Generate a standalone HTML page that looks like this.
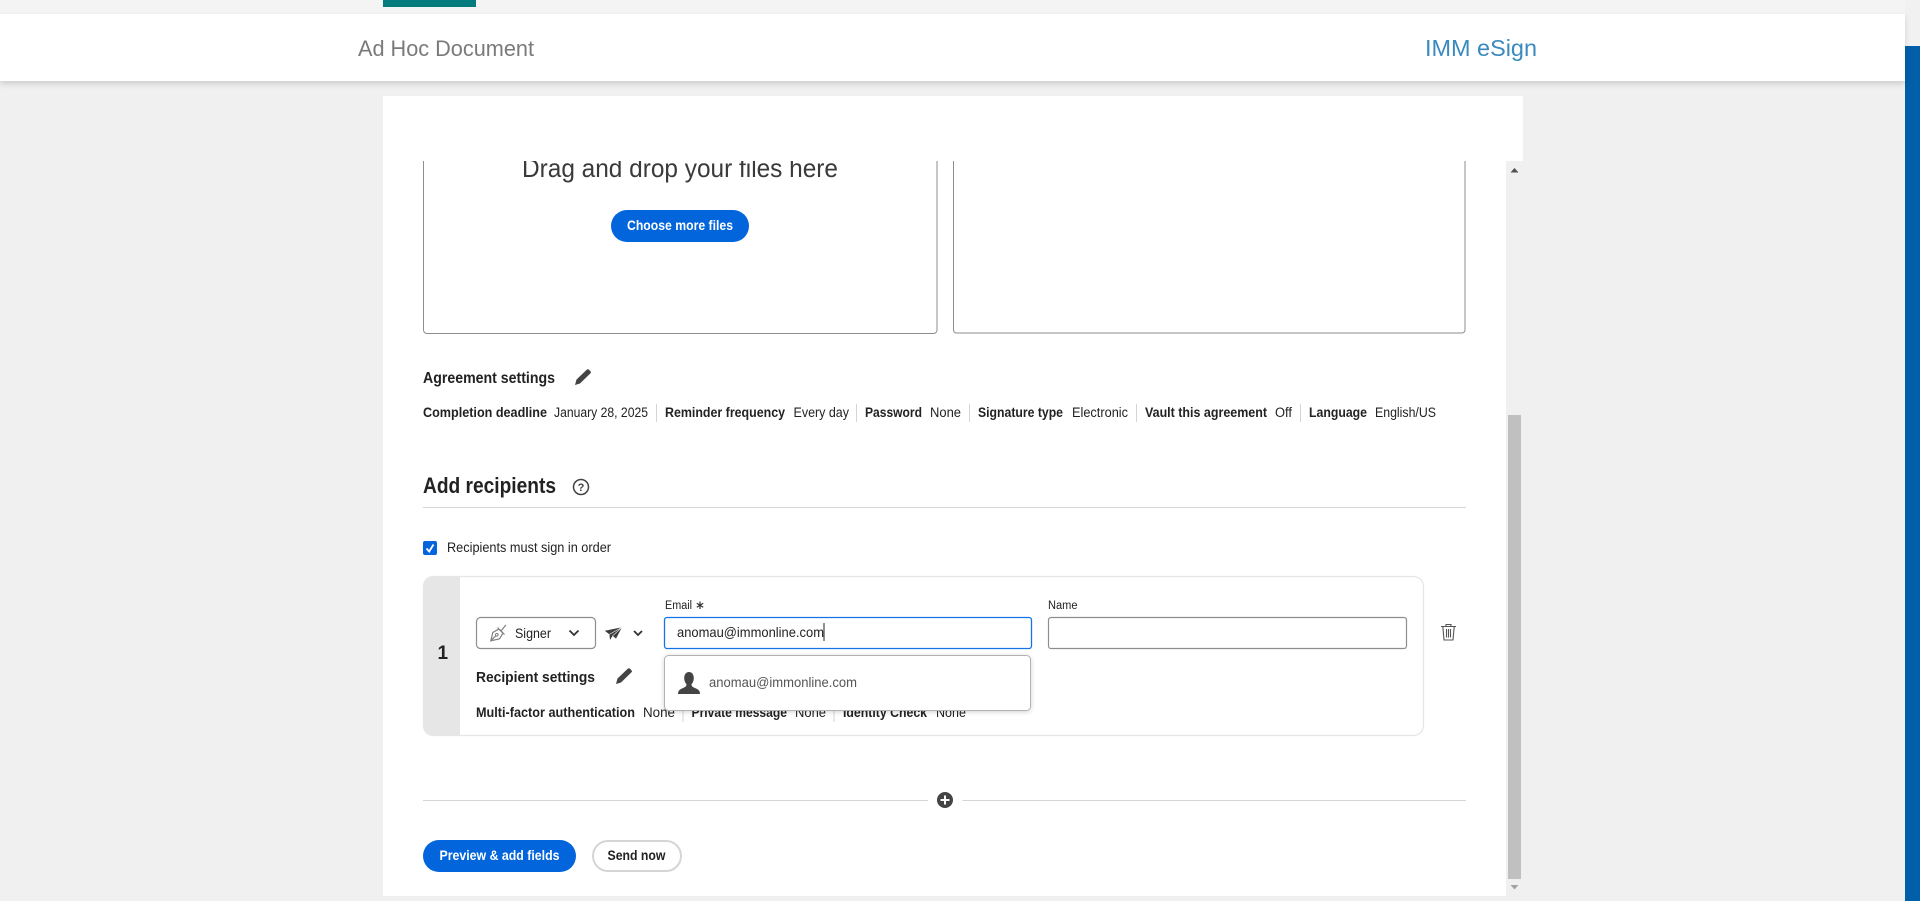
<!DOCTYPE html>
<html lang="en">
<head>
<meta charset="utf-8">
<title>Ad Hoc Document</title>
<style>
html,body{margin:0;padding:0;width:1920px;height:901px;overflow:hidden;background:#f0f0f0}
svg{display:block;position:absolute;left:0;top:0}
text{font-family:"Liberation Sans",sans-serif;fill:#222;font-size:13.5px}
.b{font-weight:700}
.sep{stroke:#d5d5d5;stroke-width:1}
</style>
</head>
<body>
<svg width="1920" height="901" viewBox="0 0 1920 901" xmlns="http://www.w3.org/2000/svg">
<defs>
<filter id="hs" x="-2%" y="-10%" width="104%" height="150%"><feDropShadow dx="0" dy="3" stdDeviation="3" flood-color="#000" flood-opacity=".14"/></filter>
<filter id="ds" x="-5%" y="-20%" width="110%" height="150%"><feDropShadow dx="0" dy="1" stdDeviation="2.5" flood-color="#000" flood-opacity=".18"/></filter>
<clipPath id="scrollclip"><rect x="383" y="161" width="1123" height="735"/></clipPath>
</defs>

<rect width="1920" height="901" fill="#f0f0f0"/>
<!-- top strip -->
<rect width="1905" height="14" fill="#f4f4f4"/>
<rect x="1905" y="0" width="15" height="46" fill="#f1f1f1"/>
<rect x="383" y="0" width="93" height="7" fill="#047c7e"/>
<rect x="1905" y="46" width="15" height="855" fill="#005fa8"/>

<!-- panel -->
<rect x="383" y="96" width="1140" height="800" fill="#fff"/>
<rect x="1506" y="161" width="17" height="735" fill="#f0f0f0"/>
<rect x="1508" y="415" width="13" height="464" fill="#c0c0c0"/>
<path d="M1510.5 172.5L1514.5 168L1518.5 172.5Z" fill="#505050"/>
<path d="M1510.5 885L1514.5 889.5L1518.5 885Z" fill="#a3a3a3"/>

<!-- header -->
<rect x="0" y="14" width="1905" height="67" fill="#fff" filter="url(#hs)"/>
<text x="358" y="56" textLength="176" lengthAdjust="spacingAndGlyphs" style="font-size:22px;fill:#7a7a7a">Ad Hoc Document</text>
<text x="1425" y="56" textLength="112" lengthAdjust="spacingAndGlyphs" style="font-size:23px;fill:#3a8abf">IMM eSign</text>

<!-- upload boxes -->
<g clip-path="url(#scrollclip)">
<text x="522" y="177" textLength="316" lengthAdjust="spacingAndGlyphs" style="font-size:26px;fill:#3a3a3a">Drag and drop your files here</text>
</g>
<path d="M423.5 161V330a3.5 3.5 0 0 0 3.5 3.5H933.5a3.5 3.5 0 0 0 3.5-3.5V161" fill="none" stroke="#8e8e8e" stroke-width="1"/>
<path d="M953.5 161V330a3 3 0 0 0 3 3H1462a3 3 0 0 0 3-3V161" fill="none" stroke="#8e8e8e" stroke-width="1"/>
<rect x="611" y="210" width="138" height="32" rx="16" fill="#0265dc"/>
<text x="627" y="230" class="b" textLength="106" lengthAdjust="spacingAndGlyphs" style="fill:#fff;font-size:13.5px">Choose more files</text>

<!-- agreement settings -->
<text x="423" y="383" class="b" textLength="132" lengthAdjust="spacingAndGlyphs" style="font-size:16px">Agreement settings</text>
<path d="M575 385L576.5 379.5L587 369.5Q588 369 589 369.8L590.5 371.3Q591.3 372.3 590.5 373.3L580 383.5Z" fill="#444"/>

<text x="423" y="417" class="b" textLength="124" lengthAdjust="spacingAndGlyphs">Completion deadline</text>
<text x="554" y="417" textLength="94" lengthAdjust="spacingAndGlyphs">January 28, 2025</text>
<line class="sep" x1="656.5" y1="404" x2="656.5" y2="422"/>
<text x="665" y="417" class="b" textLength="120" lengthAdjust="spacingAndGlyphs">Reminder frequency</text>
<text x="793.5" y="417" textLength="55.5" lengthAdjust="spacingAndGlyphs">Every day</text>
<line class="sep" x1="856.5" y1="404" x2="856.5" y2="422"/>
<text x="865" y="417" class="b" textLength="57" lengthAdjust="spacingAndGlyphs">Password</text>
<text x="930" y="417" textLength="31" lengthAdjust="spacingAndGlyphs">None</text>
<line class="sep" x1="969.5" y1="404" x2="969.5" y2="422"/>
<text x="978" y="417" class="b" textLength="85" lengthAdjust="spacingAndGlyphs">Signature type</text>
<text x="1072" y="417" textLength="56" lengthAdjust="spacingAndGlyphs">Electronic</text>
<line class="sep" x1="1136.5" y1="404" x2="1136.5" y2="422"/>
<text x="1145" y="417" class="b" textLength="122" lengthAdjust="spacingAndGlyphs">Vault this agreement</text>
<text x="1275" y="417" textLength="17" lengthAdjust="spacingAndGlyphs">Off</text>
<line class="sep" x1="1300.5" y1="404" x2="1300.5" y2="422"/>
<text x="1309" y="417" class="b" textLength="58" lengthAdjust="spacingAndGlyphs">Language</text>
<text x="1375" y="417" textLength="61" lengthAdjust="spacingAndGlyphs">English/US</text>

<!-- add recipients -->
<text x="423" y="493" class="b" textLength="133" lengthAdjust="spacingAndGlyphs" style="font-size:22px">Add recipients</text>
<circle cx="581" cy="487" r="7.5" fill="none" stroke="#444" stroke-width="1.5"/>
<text x="581" y="491" text-anchor="middle" class="b" style="font-size:11px;fill:#444">?</text>
<line x1="423" y1="507.5" x2="1466" y2="507.5" stroke="#d5d5d5" stroke-width="1"/>

<rect x="423" y="541" width="14" height="14" rx="2" fill="#0265dc"/>
<path d="M426.5 548.5L429.2 551.5L433.5 544.5" fill="none" stroke="#fff" stroke-width="1.8"/>
<text x="447" y="552" textLength="164" lengthAdjust="spacingAndGlyphs">Recipients must sign in order</text>

<!-- recipient card -->
<rect x="423.5" y="576.5" width="1000" height="159" rx="10" fill="#fff" stroke="#e6e6e6" stroke-width="1.2"/>
<path d="M433 576H460V736H433A10 10 0 0 1 423 726V586A10 10 0 0 1 433 576Z" fill="#e6e6e6"/>
<text x="437.5" y="659" class="b" style="font-size:19px">1</text>

<rect x="476.5" y="617.5" width="119" height="31" rx="4" fill="#fff" stroke="#8e8e8e" stroke-width="1.2"/>
<g fill="none" stroke="#808080" stroke-width="1.2">
<path d="M490.8 640.8L492.8 632.5L498.8 629L503 633.2L499.5 638.8Z"/>
<path d="M490.8 640.8L495.8 635.8"/>
<path d="M497.5 627.5L504.5 634.5"/>
<path d="M501 631L505.8 625"/>
</g>
<circle cx="496.8" cy="634.8" r="1.3" fill="none" stroke="#808080" stroke-width="1"/>
<text x="515" y="638" textLength="36" lengthAdjust="spacingAndGlyphs" style="font-size:14px">Signer</text>
<path d="M569.5 630.5L574 635L578.5 630.5" fill="none" stroke="#333" stroke-width="1.8"/>
<path d="M604.8 630.8L622 627.3L616 638.6L612.6 635.8L610 640L609.4 634.4Z" fill="#3d3d3d"/>
<path d="M609.4 634.4L622 627.3M612.6 635.8L622 627.3" stroke="#fff" stroke-width=".6" fill="none"/>
<path d="M634 631L638 635L642 631" fill="none" stroke="#333" stroke-width="1.8"/>

<text x="476" y="682" class="b" textLength="119" lengthAdjust="spacingAndGlyphs" style="font-size:15px">Recipient settings</text>
<path d="M616 684L617.5 678.5L628 668.5Q629 668 630 668.8L631.5 670.3Q632.3 671.3 631.5 672.3L621 682.5Z" fill="#444"/>

<text x="476" y="717" class="b" textLength="159" lengthAdjust="spacingAndGlyphs">Multi-factor authentication</text>
<text x="643" y="717" textLength="32" lengthAdjust="spacingAndGlyphs">None</text>
<line class="sep" x1="683" y1="704" x2="683" y2="722"/>
<text x="691.5" y="717" class="b" textLength="95.5" lengthAdjust="spacingAndGlyphs">Private message</text>
<text x="795" y="717" textLength="31" lengthAdjust="spacingAndGlyphs">None</text>
<line class="sep" x1="834" y1="704" x2="834" y2="722"/>
<text x="843" y="717" class="b" textLength="84" lengthAdjust="spacingAndGlyphs">Identity Check</text>
<text x="936" y="717" textLength="30" lengthAdjust="spacingAndGlyphs">None</text>

<!-- email -->
<text x="665" y="609" textLength="27" lengthAdjust="spacingAndGlyphs" style="font-size:11.5px">Email</text>
<path d="M700 601.5V609M696.8 603.3L703.2 607.2M696.8 607.2L703.2 603.3" stroke="#333" stroke-width="1.2" fill="none"/>
<rect x="664.5" y="617.5" width="367" height="31" rx="2.5" fill="#fff" stroke="#1473e6" stroke-width="1.3"/>
<text x="677" y="637" textLength="147" lengthAdjust="spacingAndGlyphs" style="font-size:14px">anomau@immonline.com</text>
<line x1="824" y1="623" x2="824" y2="641" stroke="#222" stroke-width="1"/>

<!-- name -->
<text x="1048" y="609" textLength="29.5" lengthAdjust="spacingAndGlyphs" style="font-size:11.5px">Name</text>
<rect x="1048.5" y="617.5" width="358" height="31" rx="2.5" fill="#fff" stroke="#8e8e8e" stroke-width="1.2"/>

<!-- trash -->
<g fill="none" stroke="#555" stroke-width="1.1">
<path d="M1441 626.5H1456M1446 626.5V624.5H1451V626.5"/>
<path d="M1442.8 626.5L1444 640H1453L1454.2 626.5"/>
<path d="M1446.5 629V637.5M1448.5 629V637.5M1450.5 629V637.5"/>
</g>

<!-- autocomplete dropdown -->
<rect x="664.5" y="655.5" width="366" height="55" rx="4" fill="#fff" stroke="#b3b3b3" stroke-width="1" filter="url(#ds)"/>
<path d="M689 672C692 672 693.8 674.8 693.8 678C693.8 681 692.5 683 691.5 684.5C691.5 686 692.5 687 695 688C698 689.2 700 690.5 700 694H678C678 690.5 680 689.2 683 688C685.5 687 686.5 686 686.5 684.5C685.5 683 684.2 681 684.2 678C684.2 674.8 686 672 689 672Z" fill="#444"/>
<text x="709" y="687" textLength="148" lengthAdjust="spacingAndGlyphs" style="font-size:13.5px;fill:#555">anomau@immonline.com</text>

<!-- add divider -->
<line x1="423" y1="800.5" x2="928" y2="800.5" stroke="#d5d5d5" stroke-width="1"/>
<line x1="962.5" y1="800.5" x2="1466" y2="800.5" stroke="#d5d5d5" stroke-width="1"/>
<circle cx="945" cy="800" r="8" fill="#444"/>
<path d="M945 795.5V804.5M940.5 800H949.5" stroke="#fff" stroke-width="2"/>

<!-- buttons -->
<rect x="423" y="840" width="153" height="32" rx="16" fill="#0265dc"/>
<text x="439.5" y="860" class="b" textLength="120" lengthAdjust="spacingAndGlyphs" style="fill:#fff;font-size:14px">Preview &amp; add fields</text>
<rect x="593" y="841" width="88" height="30" rx="15" fill="#fff" stroke="#d5d5d5" stroke-width="2"/>
<text x="607.5" y="860" class="b" textLength="58" lengthAdjust="spacingAndGlyphs" style="font-size:14px">Send now</text>
</svg>
</body>
</html>
